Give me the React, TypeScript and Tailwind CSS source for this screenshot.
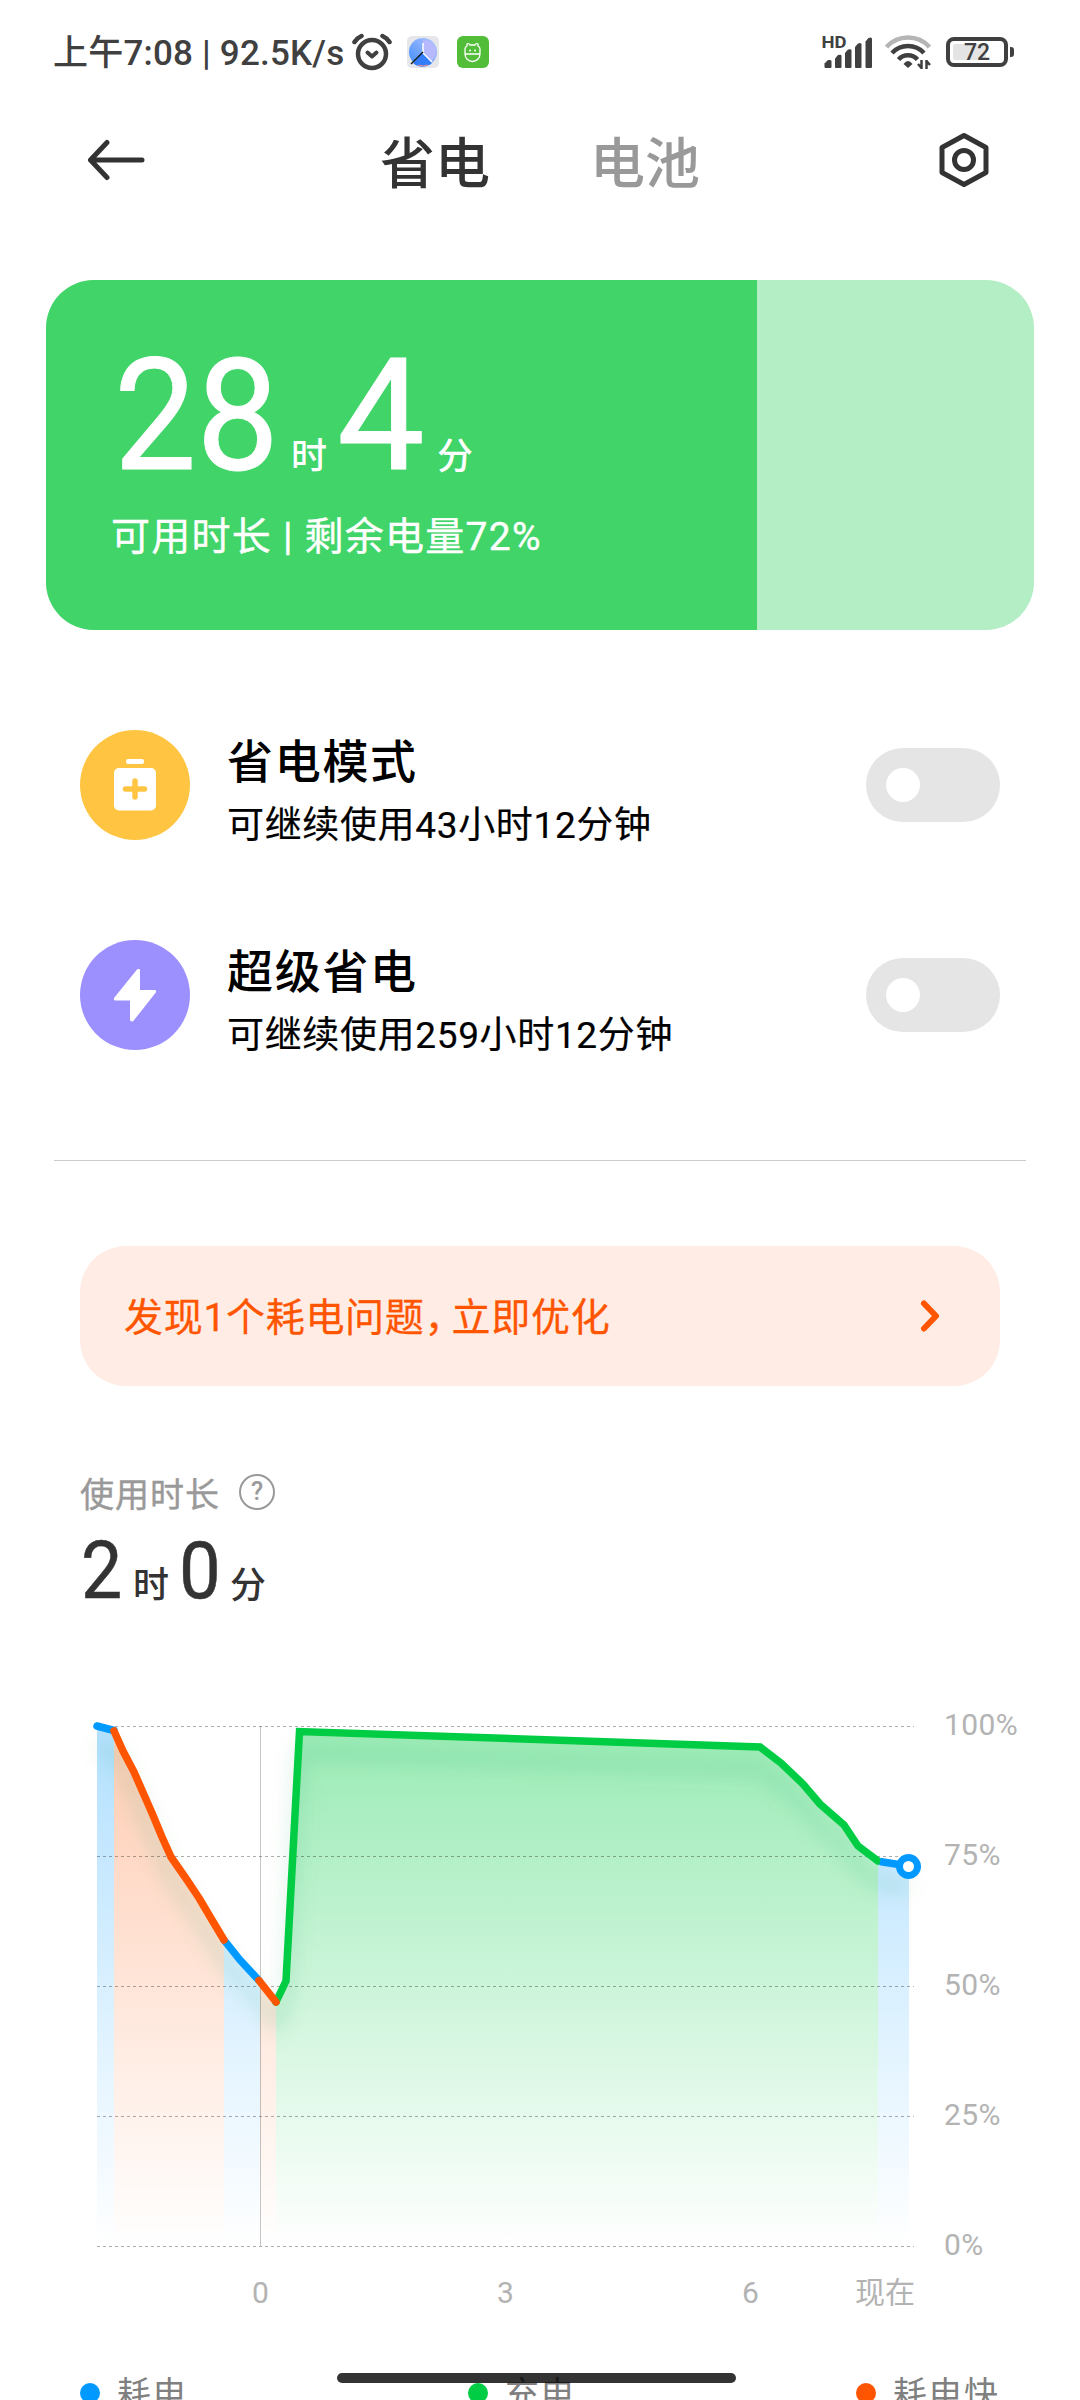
const levels = ["100%", "75%", "50%", "25%", "0%"];

const legend = [
    { name: "耗电", dot: "bg-[#0099ff]" },
    { name: "充电", dot: "bg-[#00cc44]" },
    { name: "耗电快", dot: "bg-[#ff5500]" },
];

function StatusBar() {
    return (
        <div className="flex h-[104px] items-center pl-[53px] text-[#404040]">
            <span className="mt-[3px] w-[299px] whitespace-nowrap text-[35px] leading-[40px] font-medium tracking-[0.2px]">上午7:08 | 92.5K/s</span>
            <svg className="h-[38px] w-[40px]" viewBox="0 0 40 38" fill="none" stroke="currentColor">
                <circle cx="20" cy="21" r="14" strokeWidth="4.500" />
                <path d="M2.500 9q2.500-4 7-6M37.500 9q-2.500-4-7-6" strokeWidth="4.500" strokeLinecap="round" />
                <path d="m15.500 19.500 4.500 4 4.500-4" strokeWidth="4" strokeLinecap="round" strokeLinejoin="round" />
            </svg>
            <svg className="ml-[15px] size-8" viewBox="0 0 32 32">
                <defs>
                    <linearGradient id="clock" x1="1" y1="0" x2="0" y2="1">
                        <stop offset="0" stopColor="#b9c8ff" />
                        <stop offset="0.5" stopColor="#79a9fd" />
                        <stop offset="1" stopColor="#3f8cff" />
                    </linearGradient>
                </defs>
                <rect width="32" height="32" rx="5" fill="#e6e7ea" />
                <circle cx="16" cy="16" r="14" fill="url(#clock)" />
                <path d="M16 16 6 27a14 14 0 0 0 19 0Z" fill="#327dfb" />
                <path d="M16 16V4a12 12 0 0 1 9 21Z" fill="#b6b9fd" />
                <path d="M11 29q5 2 10 0" stroke="#ef8f94" fill="none" />
                <path d="M16 7v10l9 9" stroke="#fff" strokeWidth="1.500" fill="none" />
                <path d="M16 16 4 28" stroke="#111" strokeWidth="1.200" />
            </svg>
            <svg className="ml-[18px] size-8" viewBox="0 0 32 32" fill="none" stroke="#fff" strokeWidth="1.300">
                <rect width="32" height="32" rx="6" fill="#52bd38" stroke="none" />
                <path d="M8 18V13q0-2 2-3l0-2q2-1 3 1h5q1-2 3-1v2q2 1 2 3v5a7.500 7.500 0 0 1-15 0ZM8 18h15" />
                <circle cx="13" cy="14.500" r="1" fill="#fff" stroke="none" />
                <circle cx="18" cy="14.500" r="1" fill="#fff" stroke="none" />
            </svg>

            <svg className="ml-[333px] h-[36px] w-[51px]" viewBox="822 34 51 36" fill="currentColor">
                <text x="821.500" y="48" className="text-[16px] font-bold" textLength="25" lengthAdjust="spacingAndGlyphs">HD</text>
                <path d="M824.500 63.500 828 60q3.500-.5 3.500 1v6q0 1-1 1h-5q-1 0-1-1Z" />
                <path d="M835 58.500 838 55q3.500-1 3.500 1v11q0 1-1 1H836q-1 0-1-1Z" />
                <path d="M845 53 848 49.500q3.500-1 3.500 1V67q0 1-1 1H846q-1 0-1-1Z" />
                <path d="M855 47 858 43.500q3.500-1.500 3.500 1V67q0 1-1 1H856q-1 0-1-1Z" />
                <path d="M865.500 41.500 868.500 38q3.500-1.500 3.500 1V67q0 1-1 1H866.500q-1 0-1-1Z" />
            </svg>
            <svg className="ml-[12px] h-[36px] w-[47px]" viewBox="885 35 47 36" fill="none" stroke="currentColor" strokeWidth="4.500">
                <path d="M886.500 48a29 29 0 0 1 43 0" stroke="#b5b5b5" />
                <path d="M892 54a22 22 0 0 1 32 0" />
                <path d="M898.500 60.500a13 13 0 0 1 19 0" />
                <path d="M903.500 65q4.500-6 9 0l-4.500 4Z" fill="currentColor" stroke="none" />
                <path d="M921.500 61v9M921.500 69l-3.500-4M926.500 70v-9M926.500 62l3.500 4" strokeWidth="2.500" />
            </svg>
            <div className="relative ml-[14px] flex h-[30px] w-[62px] items-center justify-center rounded-[8px] border-4 border-[#404040] text-[23px] font-medium">
                <div className="absolute top-[3px] left-[3px] h-4 w-[33px] rounded-[2px] bg-[#e4e4e4]" />
                <span className="relative top-px">72</span>
            </div>
            <div className="ml-[2px] h-[10px] w-[4px] rounded-r-[3px] bg-[#404040]" />
        </div>
    );
}

function Header() {
    return (
        <div className="flex h-[112px] items-center pl-[87px] text-[#333]">
            <svg className="h-[42px] w-[58px]" viewBox="0 0 58 42" fill="none" stroke="currentColor" strokeWidth="5" strokeLinecap="round" strokeLinejoin="round">
                <path d="M55 21H3.500M20 3.500 3.500 21 20 38.500" />
            </svg>
            <span className="mt-[7px] ml-[235px] text-[55px] leading-[60px] font-medium">省电</span>
            <span className="mt-[7px] ml-[100px] text-[55px] leading-[60px] font-medium text-[#999]">电池</span>
            <svg className="ml-[238px] h-[56px] w-[52px]" viewBox="0 0 52 56" fill="none" stroke="currentColor" strokeWidth="5" strokeLinejoin="round">
                <path d="M26 3.500 48 15.500V40.500L26 52.500 4 40.500V15.500Z" />
                <circle cx="26" cy="28" r="9.500" />
            </svg>
        </div>
    );
}

function BatteryCard() {
    return (
        <div className="relative mx-[46px] mt-[64px] h-[350px] overflow-hidden rounded-[48px] bg-[#b3eec5] text-white">
            <div className="absolute inset-y-0 left-0 w-[72%] bg-[#41d469]" />
            <div className="relative flex h-[216px] items-baseline pt-[56px] pl-[68px] leading-[160px]">
                <span className="w-[177px] origin-left scale-x-[0.94] text-[156px] [-webkit-text-stroke:1px_white]">28</span>
                <span className="w-[46px] text-[36px] font-medium">时</span>
                <span className="w-[100px] text-[156px] [-webkit-text-stroke:1px_white]">4</span>
                <span className="text-[36px] font-medium">分</span>
            </div>
            <div className="relative pt-[16px] pl-[65px] text-[39px] leading-[50px] tracking-[1.250px] [-webkit-text-stroke:0.4px]">可用时长 | 剩余电量72%</div>
        </div>
    );
}

function Toggle() {
    return (
        <div className="mt-[18px] h-[74px] w-[134px] rounded-full bg-[#e5e5e5] p-5">
            <div className="size-[34px] rounded-full bg-white" />
        </div>
    );
}

function ModeRow({ icon, title, text }) {
    return (
        <div className="flex h-[110px] px-20">
            {icon}
            <div className="mt-px ml-[37px] flex-1 leading-[63px] text-black">
                <div className="text-[46px] font-medium tracking-[1.700px]">{title}</div>
                <div className="text-[37px] tracking-[0.650px] [-webkit-text-stroke:0.2px]">{text}</div>
            </div>
            <Toggle />
        </div>
    );
}

function BatteryChart() {
    return (
        <svg className="block h-[560px] w-[850px]" viewBox="80 1700 850 560" fill="none">
            <defs>
                <linearGradient id="blue" gradientUnits="userSpaceOnUse" x1="0" y1="1726" x2="0" y2="2246">
                    <stop stopColor="#0099ff" stopOpacity="0.3" />
                    <stop offset="1" stopColor="#0099ff" stopOpacity="0" />
                </linearGradient>
                <linearGradient id="orange" gradientUnits="userSpaceOnUse" x1="0" y1="1726" x2="0" y2="2246">
                    <stop stopColor="#ff5500" stopOpacity="0.3" />
                    <stop offset="1" stopColor="#ff5500" stopOpacity="0" />
                </linearGradient>
                <linearGradient id="green" gradientUnits="userSpaceOnUse" x1="0" y1="1726" x2="0" y2="2246">
                    <stop stopColor="#00cc44" stopOpacity="0.4" />
                    <stop offset="1" stopColor="#00cc44" stopOpacity="0" />
                </linearGradient>
                <filter id="soft" x="-10%" y="-20%" width="120%" height="140%">
                    <feGaussianBlur stdDeviation="9" />
                </filter>
            </defs>

            <path d="M97 1726 114 1731V2246H97Z" fill="url(#blue)" />
            <path d="M114 1731 123 1751 134 1772 152 1813 171 1857 187 1880 199 1898 212 1920 224 1940V2246H114Z" fill="url(#orange)" />
            <path d="M224 1940 240 1960 260 1981V2246H224Z" fill="url(#blue)" />
            <path d="M260 1981 276 2002V2246H260Z" fill="url(#orange)" />
            <path d="M276 2002 286 1981 299 1731 760 1747 781 1763 803 1784 820 1804 844 1825 858 1846 878 1861V2246H276Z" fill="url(#green)" />
            <path d="M878 1861 909 1866V2246H878Z" fill="url(#blue)" />

            {/* shadow under the whole line */}
            <path
                d="M97 1726 114 1731 134 1772 152 1813 171 1857 199 1898 224 1940 260 1981 276 2002 286 1981 299 1731 760 1747 781 1763 803 1784 820 1804 844 1825 858 1846 878 1861 909 1866"
                transform="translate(0 22)"
                stroke="#00a050"
                strokeOpacity="0.12"
                strokeWidth="14"
                filter="url(#soft)"
            />

            <path d="M97 1726.500H914M97 1856.500H914M97 1986.500H914M97 2116.500H914M97 2246.500H914" stroke="#000" strokeOpacity="0.32" strokeDasharray="3 3" />
            <path d="M260.500 1726V2246" stroke="#000" strokeOpacity="0.22" />

            <g strokeWidth="7.500" strokeLinecap="round" strokeLinejoin="round">
                <path d="M97 1726 114 1730.500" stroke="#0099ff" />
                <path d="M224 1940 240 1960 259 1980.500" stroke="#0099ff" />
                <path d="M276 2002 286 1981 299.500 1731.500 760 1747 781 1763 803 1784 820 1804 844 1825 858 1846 878 1861" stroke="#00cc44" strokeLinejoin="miter" />
                <path d="M880 1861.500 908 1866" stroke="#0099ff" strokeLinecap="butt" />
                <path d="M114 1731 123 1751 134 1772 152 1813 162 1837 171 1857 187 1880 199 1898 212 1920 224 1940" stroke="#ff5500" />
                <path d="M259 1980.500 276 2002" stroke="#ff5500" />
            </g>
            <circle cx="908.500" cy="1866.500" r="9" fill="#fff" stroke="#0099ff" strokeWidth="7" />
        </svg>
    );
}

export default function App() {
    return (
        <div className="relative h-[2400px] w-[1080px] overflow-hidden bg-white font-['Roboto','Noto_Sans_CJK_SC',sans-serif]">
            <StatusBar />
            <Header />
            <BatteryCard />

            <div className="mt-[100px] flex flex-col gap-[100px]">
                <ModeRow
                    title="省电模式"
                    text="可继续使用43小时12分钟"
                    icon={
                        <svg className="size-[110px]" viewBox="0 0 110 110" fill="#fff">
                            <circle cx="55" cy="55" r="55" fill="#ffc542" />
                            <rect x="46" y="29" width="18" height="5" rx="2" />
                            <rect x="34" y="38" width="42" height="42.500" rx="5" />
                            <path d="M55 51v16M45.500 59h19" stroke="#ffc542" strokeWidth="5.500" strokeLinecap="round" />
                        </svg>
                    }
                />
                <ModeRow
                    title="超级省电"
                    text="可继续使用259小时12分钟"
                    icon={
                        <svg className="size-[110px]" viewBox="0 0 110 110" fill="#fff">
                            <circle cx="55" cy="55" r="55" fill="#9c90ff" />
                            <path d="M58 30 35 58.500q-.5 1 .5 1H51V80l1.500.5L75 52q.5-1-.5-1H59V30Z" stroke="#fff" strokeWidth="2" strokeLinejoin="round" />
                        </svg>
                    }
                />
            </div>

            <div className="mx-[54px] mt-[110px] h-px bg-[#ccc]" />

            <div className="mx-20 mt-[85px] flex h-[140px] items-center justify-between rounded-[46px] bg-[#ffede5] pr-[60px] pl-[44px] text-[#ff5500]">
                <span className="mt-[3px] text-[39px] leading-[50px] tracking-[0.700px] [-webkit-text-stroke:0.3px]">
                    发现1个耗电问题<span className="tracking-[-12px]">，</span>立即优化
                </span>
                <svg className="h-[32px] w-[20px]" viewBox="0 0 20 32" fill="none" stroke="currentColor" strokeWidth="6" strokeLinecap="round" strokeLinejoin="round">
                    <path d="m4 3.500 12 12.500L4 28.500" />
                </svg>
            </div>

            <div className="mt-[86px] flex h-[40px] items-center pl-20 text-[34px] text-[#999]">
                <span className="mt-[6px] leading-[40px] tracking-[1px] [-webkit-text-stroke:0.4px]">使用时长</span>
                <div className="ml-[19px] flex size-[36px] items-center justify-center rounded-full border-2 border-[#999] text-[25px] font-medium">?</div>
            </div>
            <div className="flex h-[99px] items-baseline pt-[19px] pl-[81px] leading-[80px] text-[#333]">
                <span className="w-[52px] origin-left scale-x-[0.93] text-[79px] [-webkit-text-stroke:0.5px]">2</span>
                <span className="w-[46px] text-[36px] font-medium">时</span>
                <span className="w-[51px] origin-left scale-x-[0.94] text-[79px] [-webkit-text-stroke:0.5px]">0</span>
                <span className="text-[36px] font-medium">分</span>
            </div>

            <div className="mt-[89px] flex pl-20 text-[30px] text-[#b3b3b3]">
                <BatteryChart />
                <div className="ml-[14px] pt-[5px]">
                    {levels.map((level) => (
                        <div key={level} className="h-[130px] leading-[40px] tracking-[0.400px]">{level}</div>
                    ))}
                </div>
            </div>
            <div className="-mt-[82px] flex pl-[138px] text-[30px] leading-[40px] text-[#b3b3b3]">
                <span className="w-[245px] text-center">0</span>
                <span className="w-[245px] text-center">3</span>
                <span className="w-[245px] text-center">6</span>
                <span className="-ml-[18px]">现在</span>
            </div>

            <div className="mt-[49px] flex pl-20 text-[34px] leading-[60px] text-[#808080]">
                {legend.map((item) => (
                    <div key={item.name} className="flex w-[388px] shrink-0 items-center">
                        <div className={`size-5 rounded-full ${item.dot}`} />
                        <span className="mt-[2px] ml-[17px] tracking-[1.500px]">{item.name}</span>
                    </div>
                ))}
            </div>

            <div className="absolute top-[2373px] left-[337px] h-[10px] w-[399px] rounded-full bg-black/80" />
        </div>
    );
}
